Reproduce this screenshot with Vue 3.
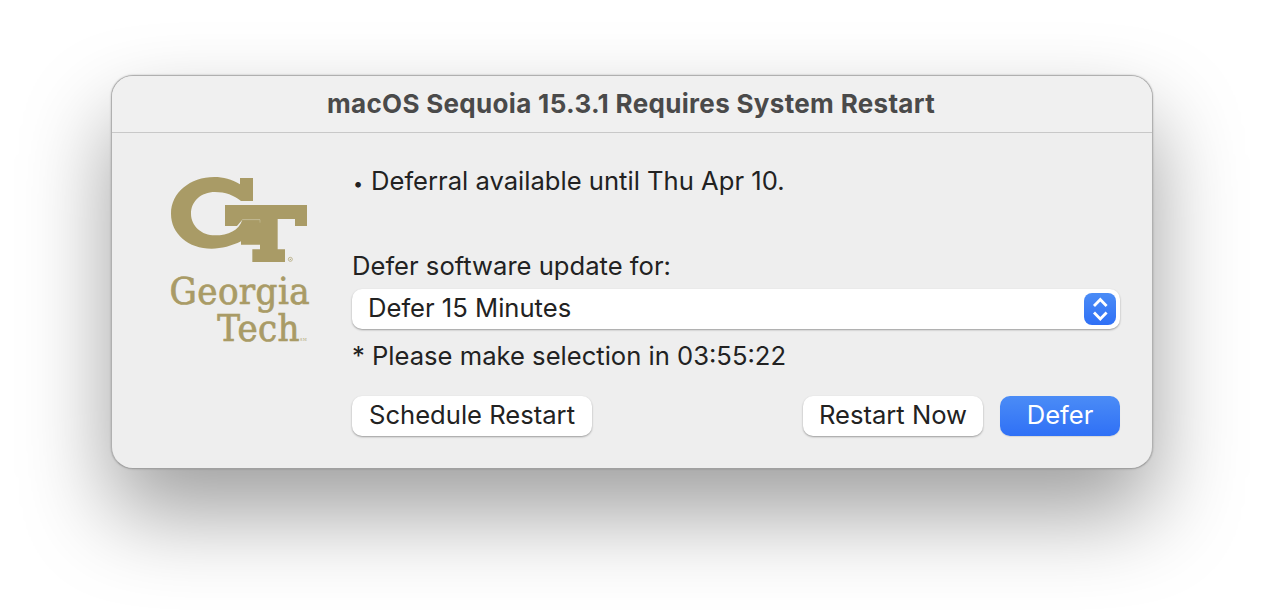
<template>
  <div class="screen">
    <section class="dialog">
      <header class="titlebar">macOS Sequoia 15.3.1 Requires System Restart</header>
      <div class="body">
        <div class="logo">
          <svg class="gt" viewBox="0 0 450 288" width="150" height="96">
            <path d="M225 18H264V87H228C208 70 180 60 150 60C108 60 78 88 78 125C78 162 110 190 150 190C190 190 222 175 232 143H285V218H228V208C200 222 170 230 140 230C70 230 18 185 18 125C18 62 75 15 148 15C175 15 200 22 225 37Z" />
            <path d="M180 99H426V162H390V141H338V232H360V270H262V232H285V143H232L216 162H180Z" />
            <path class="seam" d="M232 143H285V152" />
            <circle cx="376" cy="262" r="6" fill="none" stroke="#a99b66" stroke-width="2" />
            <circle cx="376" cy="262" r="2" />
          </svg>
          <div class="wordmark">
            <div class="word-georgia">Georgia</div>
            <div class="word-tech">Tech<span class="sm">SM</span></div>
          </div>
        </div>
        <div class="content">
          <p class="note"><span class="bullet">•</span>Deferral available until Thu Apr 10.</p>
          <label class="field-label">Defer software update for:</label>
          <div class="select">
            <span class="select-text">{{ selected }}</span>
            <span class="stepper">
              <svg viewBox="0 0 32 32" width="32" height="32">
                <path d="M10 13L16.3 6.5L22.6 13M10 19.5L16.3 26L22.6 19.5" />
              </svg>
            </span>
          </div>
          <p class="countdown">* Please make selection in {{ countdown }}</p>
          <div class="actions">
            <button class="btn schedule">Schedule Restart</button>
            <button class="btn restart">Restart Now</button>
            <button class="btn primary">Defer</button>
          </div>
        </div>
      </div>
    </section>
  </div>
</template>

<script setup>
const selected = 'Defer 15 Minutes'
const countdown = '03:55:22'
</script>

<style>
html,
body {
  background: #fff;
}
</style>

<style scoped>
.screen {
  width: 1264px;
  height: 616px;
  padding: 75px 0 0 111px;
  box-sizing: border-box;
  overflow: hidden;
  font-family: Inter, "Liberation Sans", sans-serif;
}

.dialog {
  width: 1042px;
  height: 394px;
  box-sizing: border-box;
  background: #eeeeee;
  border: 1px solid #b0b0b0;
  border-bottom-color: #a0a0a0;
  border-radius: 22px;
  box-shadow: 0 44px 88px rgba(0, 0, 0, 0.38), 0 0 2px rgba(0, 0, 0, 0.25);
  overflow: hidden;
}

.titlebar {
  height: 56px;
  line-height: 55px;
  padding-right: 2px;
  text-align: center;
  font-size: 26px;
  font-weight: 700;
  letter-spacing: 0.32px;
  color: #4a4a4a;
  background: #f0f0f0;
  border-bottom: 1px solid #c8c8c8;
}

.body {
  display: flex;
  padding-right: 32px;
}

.logo {
  width: 240px;
  flex: none;
  padding: 39px 0 0 53px;
  box-sizing: border-box;
}

.gt {
  display: block;
  fill: #a99b66;
}

.seam {
  fill: none;
  stroke: #cfc8a8;
  stroke-width: 1.5;
}

.wordmark {
  width: 150px;
  margin-top: 5px;
  font-family: "DejaVu Serif Condensed", "DejaVu Serif", serif;
  font-size: 38px;
  line-height: 37px;
  letter-spacing: 0.4px;
  color: #a99b66;
  -webkit-text-stroke: 0.7px #a99b66;
  text-align: right;
}

.word-georgia {
  padding-right: 5px;
}

.word-tech {
  padding-right: 8px;
}

.sm {
  font-size: 4px;
  line-height: 1;
  -webkit-text-stroke: 0;
}

.content {
  flex: 1;
  padding-top: 30px;
  font-size: 25.6px;
  color: #222;
}

.note {
  margin: 0;
  height: 36px;
  line-height: 36px;
}

.bullet {
  display: inline-block;
  width: 19px;
  padding-left: 1px;
  box-sizing: border-box;
  font-size: 18px;
}

.field-label {
  display: block;
  margin-top: 49px;
  height: 36px;
  line-height: 36px;
}

.select {
  margin-top: 5px;
  height: 40px;
  padding: 0 4px 0 16px;
  display: flex;
  align-items: center;
  justify-content: space-between;
  background: #fff;
  border-radius: 10px;
  box-shadow: 0 1px 2px rgba(0, 0, 0, 0.35);
}

.select-text {
  padding-bottom: 4px;
}

.stepper {
  width: 32px;
  height: 32px;
  border-radius: 8px;
  background: linear-gradient(#4b8cf6, #2f70f6);
}

.stepper svg {
  display: block;
  fill: none;
  stroke: #fff;
  stroke-width: 2.8;
}

.countdown {
  margin: 9px 0 0;
  height: 36px;
  line-height: 36px;
}

.actions {
  display: flex;
  gap: 17px;
  margin-top: 22px;
}

.btn {
  height: 40px;
  padding: 0 0 4px;
  border: 0;
  border-radius: 10px;
  background: #fff;
  font: inherit;
  color: #222;
  box-shadow: 0 1px 2px rgba(0, 0, 0, 0.35);
}

.schedule {
  width: 240px;
  margin-right: auto;
}

.restart {
  width: 180px;
}

.primary {
  width: 120px;
  color: #fff;
  background: linear-gradient(#4b8cf6, #2f70f6);
  box-shadow: 0 1px 1px rgba(0, 0, 0, 0.1);
}
</style>
